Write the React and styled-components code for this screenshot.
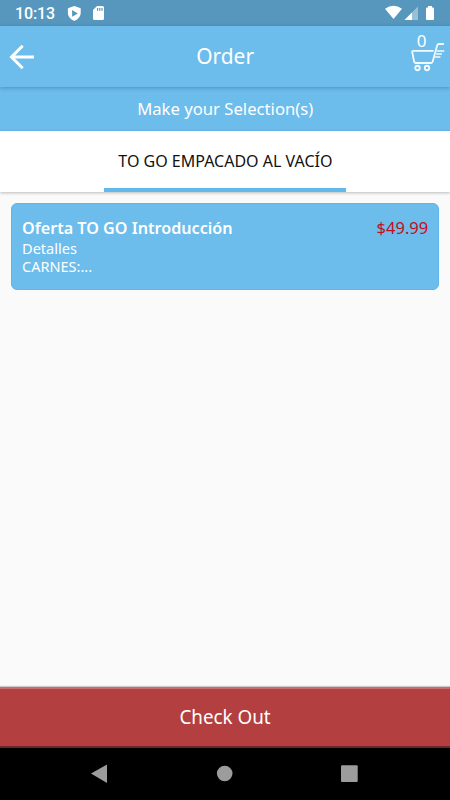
import React from 'react';
import styled, { createGlobalStyle } from 'styled-components';

const Global = createGlobalStyle`
  * { box-sizing: border-box; }
  body { margin: 0; background: #fafafa; }
`;
const Screen = styled.div`
  width: 450px; height: 800px; display: flex; flex-direction: column;
  overflow: hidden; background: #fafafa; color: #fff;
  font-family: "Noto Sans", "Open Sans", sans-serif;
`;
const Label = styled.span`
  display: block; white-space: nowrap; margin: 0;
  font-size: ${p => p.$size}px; line-height: ${p => p.$line || 24}px;
  font-weight: ${p => p.$weight || 400};
  color: ${p => p.$color || '#fff'};
  transform: scaleX(${p => p.$stretch || 1});
  transform-origin: ${p => p.$origin || 'center'};
`;
const Title = styled(Label)`padding-bottom: 2px;`;
const StatusBar = styled.header`
  height: 26px; flex: none; background: #5797be; display: flex;
  justify-content: space-between; padding-left: 15px;
`;
const StatusGroup = styled.div`display: flex; align-items: center;`;
const Clock = styled.time`
  font: 500 16px/26px Roboto, sans-serif; width: 52px; padding-top: 2px; letter-spacing: -.15px;
`;
const AppBar = styled.div`
  height: 61px; flex: none; background: #6cbcec; display: grid;
  grid-template-columns: 60px 1fr 60px; align-items: center; justify-items: center;
  z-index: 1; box-shadow: 0 1px 4px rgba(0,45,75,.3);
`;
const BackButton = styled.button`
  border: 0; background: none; padding: 0 0 0 8px; height: 28px; justify-self: start;
`;
const CartButton = styled.button`
  border: 0; background: none; padding: 0; width: 40px; height: 45px;
  display: flex; flex-direction: column; align-self: start; justify-self: end;
  margin: 5px 2px 0 0; color: #fff;
`;
const CartCount = styled.span`
  font: 17px/19px "Noto Sans", sans-serif; width: 27px; height: 11px; text-align: center;
`;
const Instruction = styled.div`
  height: 44px; flex: none; background: #6cbcec; display: flex;
  align-items: center; justify-content: center;
`;
const Tabs = styled.nav`
  height: 61px; flex: none; background: #fff; display: flex; justify-content: center;
  box-shadow: 0 1px 3px rgba(0,0,0,.25);
`;
const Tab = styled.div`
  width: 242px; border-bottom: 4px solid #62b8eb; display: flex;
  align-items: center; justify-content: center; padding-top: 3px;
`;
const Content = styled.main`flex: 1; padding: 11px;`;
const Card = styled.article`
  height: 87px; background: #6cbcec; border: 1px solid #5eb6ea; border-radius: 6px;
  padding: 12px 10px; display: flex; justify-content: space-between;
`;
const Details = styled.div`display: flex; flex-direction: column; align-items: flex-start;`;
const Description = styled.div`margin-top: -1px;`;
const Checkout = styled.button`
  height: 61px; flex: none; border: 0; background: #b43f41; display: flex;
  align-items: center; justify-content: center; padding: 0 0 1px; font-family: inherit;
  border-top: 2px solid #c66b6e; border-bottom: 2px solid #702628;
  box-shadow: 0 -1px 1px rgba(100,50,50,.25);
`;
const Navigation = styled.footer`
  height: 52px; flex: none; background: #000; display: flex;
  justify-content: center; align-items: center;
`;

export default function App() {
  return <><Global /><Screen>
    <StatusBar>
      <StatusGroup>
        <Clock>10:13</Clock>
        <svg width="40" height="26" viewBox="67 0 40 26" fill="#fff">
          <path fillRule="evenodd" d="M74.3 6 80.7 8.2v4.6c0 4-2.9 6.8-6.4 8.2-3.5-1.4-6.4-4.2-6.4-8.2V8.2zM72.1 10v6.8l5.7-3.4z" />
          <path fillRule="evenodd" d="M97 6h5.500q1.500 0 1.500 1.500v11q0 1.500-1.500 1.500h-8q-1.500 0-1.500-1.500V10zM97 8v2.700h1.200V8zm2.200 0v2.700h1.200V8zm2.200 0v2.700h1.200V8z" />
        </svg>
      </StatusGroup>
      <svg width="70" height="26" viewBox="380 0 70 26" fill="#fff">
        <path d="M385 8.800q8.500-6 17 0L393.500 19z" />
        <path d="M418 6.500V20h-13.500z" opacity=".4" /><path d="M412 12.500V20h-7.500z" />
        <path d="M428 6h4v1.500h1q1 0 1 1V19q0 1-1 1h-6q-1 0-1-1V8.500q0-1 1-1h1z" />
      </svg>
    </StatusBar>
    <AppBar>
      <BackButton aria-label="Back"><svg width="28" height="28" viewBox="8 43 28 28" fill="none" stroke="#fff" strokeWidth="3"><path d="M34 57H12M22.700 45.700 11.500 57l11.200 11.300" /></svg></BackButton>
      <Title as="h1" $size={22.5} $line={30} $stretch={.93}>Order</Title>
      <CartButton aria-label="Cart">
        <CartCount>0</CartCount>
        <svg width="40" height="30" viewBox="408 42 40 30" fill="none" stroke="#fff" strokeOpacity=".92" strokeLinecap="round" strokeLinejoin="round">
          <path strokeWidth="1.800" d="M443.200 44h-4.500q-1 0-1.400 1l-4.600 16.500q-.4 1.500-1.700 1.500h-15q-1.500 0-1.900-1.500l-1.900-9.500q-.2-1.200 1-1.200H433" />
          <path strokeWidth="1.300" d="M437.300 51h6.500M436.500 54h5M435.500 57h4.500" />
          <circle cx="417.500" cy="68" r="2.200" strokeWidth="1.900" /><circle cx="427" cy="68" r="2.200" strokeWidth="1.900" />
        </svg>
      </CartButton>
    </AppBar>
    <Instruction><Label $size={16.5} $stretch={1.01}>Make your Selection(s)</Label></Instruction>
    <Tabs><Tab><Label $size={16.5} $stretch={.97} $color="#111">TO GO EMPACADO AL VACÍO</Label></Tab></Tabs>
    <Content><Card>
      <Details>
        <Label $size={16.5} $weight={600} $origin="left" $stretch={.978}>Oferta TO GO Introducción</Label>
        <Description>
          <Label $size={14.5} $line={18} $origin="left" $stretch={1.005}>Detalles</Label>
          <Label $size={14.5} $line={18} $origin="left" $stretch={1}>CARNES:...</Label>
        </Description>
      </Details>
      <Label $size={17} $origin="right" $stretch={.97} $color="#c60d1b">$49.99</Label>
    </Card></Content>
    <Checkout><Label $size={19} $stretch={.99}>Check Out</Label></Checkout>
    <Navigation><svg width="450" height="52" viewBox="0 748 450 52" fill="#9c9c9c">
      <path d="M91 773.500 107 764.500v18.500z" /><circle cx="224.700" cy="773.500" r="7.800" />
      <rect x="341" y="765.300" width="16.700" height="16.700" rx="1" />
    </svg></Navigation>
  </Screen></>;
}
